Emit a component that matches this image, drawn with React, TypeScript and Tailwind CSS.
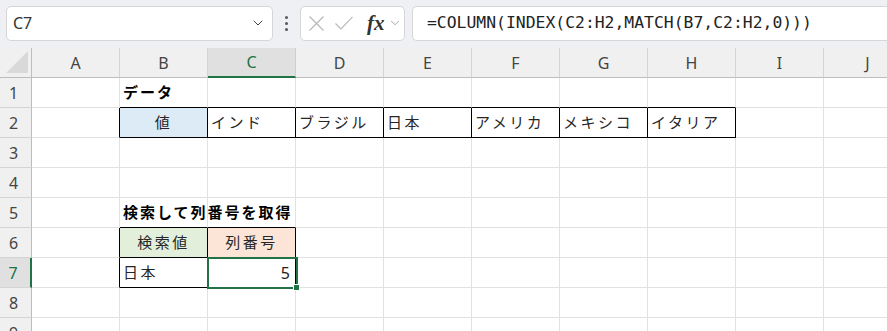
import React from "react";
import { ChevronDown } from "lucide-react";

const COLS = ["A", "B", "C", "D", "E", "F", "G", "H", "I", "J"];
const ROWS = [1, 2, 3, 4, 5, 6, 7, 8, 9];

type CellData = {
  text: string;
  bold?: boolean;
  fill?: string;
  align?: "left" | "center" | "right";
};

const cells: Record<string, CellData> = {
  B1: { text: "データ", bold: true },
  B2: { text: "値", fill: "bg-[#ddebf7]", align: "center" },
  C2: { text: "インド" },
  D2: { text: "ブラジル" },
  E2: { text: "日本" },
  F2: { text: "アメリカ" },
  G2: { text: "メキシコ" },
  H2: { text: "イタリア" },
  B5: { text: "検索して列番号を取得", bold: true },
  B6: { text: "検索値", fill: "bg-[#e2efda]", align: "center" },
  C6: { text: "列番号", fill: "bg-[#fce4d6]", align: "center" },
  B7: { text: "日本" },
  C7: { text: "5", align: "right" },
};

const boxed = new Set(["B2", "C2", "D2", "E2", "F2", "G2", "H2", "B6", "C6", "B7", "C7"]);

const isBoxed = (r: number, c: number) => c >= 0 && c < COLS.length && boxed.has(COLS[c] + r);

const Cell: React.FC<{ r: number; c: number }> = ({ r, c }) => {
  const key = COLS[c] + r;
  const data = cells[key];
  const right = isBoxed(r, c) || isBoxed(r, c + 1);
  const bottom = isBoxed(r, c) || isBoxed(r + 1, c);
  const selected = key === "C7";
  const align =
    data?.align === "center"
      ? "justify-center"
      : data?.align === "right"
      ? "justify-end pr-[5px]"
      : "justify-start pl-[3px]";

  return (
    <div
      className={[
        "relative flex items-center h-[30px] w-[88px] shrink-0 border-r border-b whitespace-nowrap",
        right ? "border-r-black" : "border-r-[#e1e1e1]",
        bottom ? "border-b-black" : "border-b-[#e1e1e1]",
        data?.fill ?? "bg-white",
        align,
      ].join(" ")}
    >
      {data && (
        <span
          className={
            data.bold
              ? "relative z-10 text-[15px] font-bold tracking-[2px] text-black"
              : data.align === "right"
              ? "relative z-10 text-[16px] text-[#222]"
              : "relative z-10 text-[15px] tracking-[2.5px] text-[#262626]"
          }
        >
          {data.text}
        </span>
      )}
      {selected && (
        <div className="absolute z-20 -left-[1px] -top-[1px] w-[91px] h-[32px] border-2 border-[#217346] pointer-events-none">
          <div className="absolute -right-[4px] -bottom-[4px] w-[7px] h-[7px] bg-[#217346] border border-white" />
        </div>
      )}
    </div>
  );
};

const App: React.FC = () => {
  return (
    <div
      className="w-[887px] h-[331px] overflow-hidden bg-white"
      style={{ fontFamily: '"Noto Sans", "Noto Sans CJK JP", sans-serif' }}
    >
      {/* Formula bar */}
      <div className="flex items-center h-[48px] bg-[#eef0f3] pl-[6px] pb-[2px]">
        <div className="flex items-center justify-between w-[267px] h-[35px] bg-white border border-[#d6d6d6] rounded-[5px] pl-[6px] pr-[6px]">
          <span className="text-[16px] text-[#333]">C7</span>
          <ChevronDown size={16} strokeWidth={1.5} className="text-[#444]" />
        </div>
        <div className="flex flex-col items-center justify-center gap-[3px] w-[27px]">
          <span className="w-[3px] h-[3px] bg-[#555] rounded-full" />
          <span className="w-[3px] h-[3px] bg-[#555] rounded-full" />
          <span className="w-[3px] h-[3px] bg-[#555] rounded-full" />
        </div>
        <div className="flex items-center w-[105px] h-[35px] bg-white border border-[#d6d6d6] rounded-[5px] pl-[8px]">
          <svg width="15" height="15" viewBox="0 0 15 15" className="shrink-0">
            <path d="M0.5 0.5 L14.5 14.5 M14.5 0.5 L0.5 14.5" stroke="#b8b8b8" strokeWidth="1.2" fill="none" />
          </svg>
          <svg width="18" height="14" viewBox="0 0 18 14" className="ml-[11px] shrink-0">
            <path d="M0.5 7.5 L6 13 L17.5 0.8" stroke="#b8b8b8" strokeWidth="1.2" fill="none" />
          </svg>
          <span
            className="ml-[14px] text-[21px] italic font-bold text-[#333] leading-none"
            style={{ fontFamily: '"Liberation Serif", serif' }}
          >
            fx
          </span>
          <ChevronDown size={14} strokeWidth={1.3} className="ml-[3px] text-[#888]" />
        </div>
        <div className="flex items-center flex-1 h-[35px] ml-[7px] bg-white border border-[#d6d6d6] border-r-0 rounded-l-[5px] pl-[14px]">
          <span
            className="text-[16.4px] text-[#222]"
            style={{ fontFamily: '"DejaVu Sans Mono", monospace' }}
          >
            =COLUMN(INDEX(C2:H2,MATCH(B7,C2:H2,0)))
          </span>
        </div>
      </div>

      {/* Column headers */}
      <div className="flex h-[30px]">
        <div className="relative w-[32px] shrink-0 bg-[#f0f0f0] border-r border-b border-[#bdbdbd]">
          <svg width="22" height="22" viewBox="0 0 22 22" className="absolute left-[6px] top-[3px]">
            <polygon points="22,0 22,22 0,22" fill="#d9d9d9" />
          </svg>
        </div>
        {COLS.map((c) =>
          c === "C" ? (
            <div
              key={c}
              className="flex items-center justify-center w-[88px] shrink-0 bg-[#e0e0e0] border-r border-r-[#cfcfcf] border-b-2 border-b-[#217346] text-[16px] text-[#217346]"
            >
              {c}
            </div>
          ) : (
            <div
              key={c}
              className="flex items-center justify-center w-[88px] shrink-0 bg-[#f0f0f0] border-r border-r-[#d4d4d4] border-b border-b-[#bdbdbd] text-[16px] text-[#444]"
            >
              {c}
            </div>
          )
        )}
      </div>

      {/* Rows */}
      {ROWS.map((r) => (
        <div key={r} className="flex h-[30px]">
          {r === 7 ? (
            <div className="flex items-center justify-center w-[32px] shrink-0 pr-[4px] bg-[#e0e0e0] border-r-2 border-r-[#217346] border-b border-b-[#d4d4d4] text-[16px] text-[#217346]">
              {r}
            </div>
          ) : (
            <div className="flex items-center justify-center w-[32px] shrink-0 pr-[4px] bg-[#f0f0f0] border-r border-r-[#bdbdbd] border-b border-b-[#d4d4d4] text-[16px] text-[#444]">
              {r}
            </div>
          )}
          {COLS.map((_, c) => (
            <Cell key={c} r={r} c={c} />
          ))}
        </div>
      ))}
    </div>
  );
};

export default App;
